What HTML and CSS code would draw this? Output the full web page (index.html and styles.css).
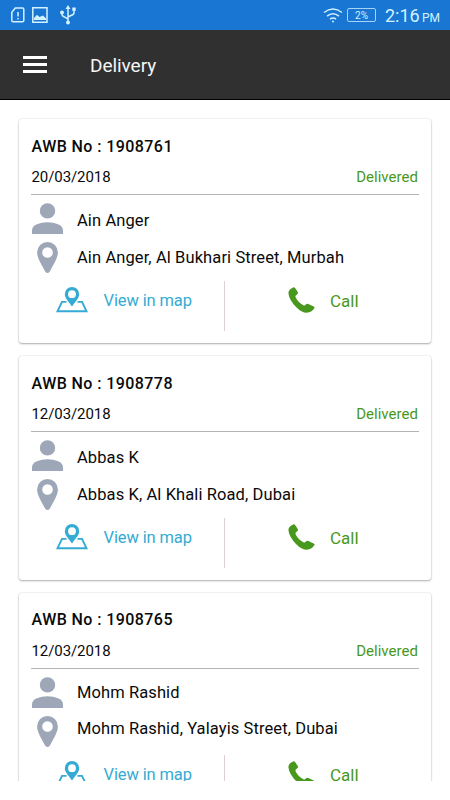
FILE: index.html
```html
<!DOCTYPE html>
<html lang="en">
<head>
<meta charset="utf-8">
<title>Delivery</title>
<link rel="stylesheet" href="styles.css">
</head>
<body>
<svg class="defs" aria-hidden="true">
  <symbol id="person" viewBox="0 0 31 31"><circle cx="15.5" cy="7.9" r="7.7"/><path d="M0 31V27.2C0 22 8 19.3 15.5 19.3S31 22 31 27.2V31Z"/></symbol>
  <symbol id="pin" viewBox="0 0 21 31"><path fill-rule="evenodd" d="M10.5 0A10.4 10.4 0 0 0 .1 10.4C.1 16 5 23.500 8.300 29.700Q10.500 32.300 12.700 29.700C16 23.500 20.900 16 20.900 10.400A10.400 10.400 0 0 0 10.500 0ZM10.500 5.200A5.300 5.300 0 1 1 10.500 15.800A5.300 5.300 0 1 1 10.500 5.200Z"/></symbol>
  <symbol id="map" viewBox="0 0 32 26"><path fill-rule="evenodd" d="M16 0A7.200 7.200 0 0 0 8.800 7.200C8.800 11.500 13 15 16 19.500C19 15 23.200 11.500 23.200 7.200A7.200 7.200 0 0 0 16 0ZM16 3.300A3.900 3.900 0 1 1 16 11.100A3.900 3.900 0 1 1 16 3.300Z"/><path d="M10.500 14.900H6L1.500 24.300H30.500L26 14.900H21.500" fill="none" stroke="currentColor" stroke-width="1.900"/></symbol>
  <symbol id="phone" viewBox="0 0 27 26"><path d="M5.700.2Q6.600.1 7.100 1L9.900 5.300Q10.400 6.200 9.500 6.900L7.800 8.400Q7.100 9.200 7.700 10.400Q10.200 15.400 15.400 18.300Q16.500 18.900 17.300 18L18.500 17Q19.300 16.500 20.300 16.900L25.700 19.500Q27 20.200 26.500 21.100Q23.600 25.700 18.800 25.800Q13.600 25.600 8 19.900Q1.300 13.300.4 6.300Q.3 2.300 5.700.2Z"/></symbol>
</svg>
<div class="screen">
  <header class="status">
    <div class="status-left">
      <svg class="sim" viewBox="0 0 14 16"><path d="M4.300 1H11.500Q12.800 1 12.800 2.300V13.500Q12.800 14.800 11.500 14.800H2Q.8 14.800.8 13.500V5.200ZM7 5V9.500M7 11V12.500"/></svg>
      <svg class="image" viewBox="0 0 16 16"><path class="outline" d="M.8.800H15V15.200H.8Z"/><path d="M2 11L5 7.800L7.500 10L11 8.500L14 11.500V13H2Z"/></svg>
      <svg class="usb" viewBox="0 0 16 20"><path class="outline" d="M8 3V17M2 8V9.500Q2 11 4 11.700L8 14M14 5V7.500Q14 9.500 11.500 10.300L8 12"/><path d="M8 0L10.500 4H5.500ZM12.300 2.500H15.700V5.800H12.300Z"/><circle cx="2" cy="7.500" r="1.900"/><circle cx="8" cy="17.500" r="2"/></svg>
    </div>
    <div class="status-right">
      <svg class="wifi" viewBox="0 0 20 15"><path d="M1 4.500Q10-2.300 19 4.500M4 8.200Q10 3.200 16 8.200M7 11.200Q10 8.900 13 11.200"/><circle cx="10" cy="13.500" r="1"/></svg>
      <span class="battery">2%</span>
      <span class="clock">2:16</span><span class="period">PM</span>
    </div>
  </header>
  <nav class="toolbar">
    <div class="menu"><i></i><i></i><i></i></div>
    <h1>Delivery</h1>
  </nav>
  <main class="list">
    <article class="card">
      <h2>AWB No : 1908761</h2>
      <div class="meta"><span>20/03/2018</span><span class="state">Delivered</span></div>
      <div class="row"><svg class="person"><use href="#person"/></svg><span>Ain Anger</span></div>
      <div class="row place"><svg class="pin"><use href="#pin"/></svg><span>Ain Anger, Al Bukhari Street, Murbah</span></div>
      <div class="actions">
        <div class="action view"><svg class="map"><use href="#map"/></svg><span>View in map</span></div>
        <div class="action call"><svg class="phone"><use href="#phone"/></svg><span>Call</span></div>
      </div>
    </article>
    <article class="card">
      <h2>AWB No : 1908778</h2>
      <div class="meta"><span>12/03/2018</span><span class="state">Delivered</span></div>
      <div class="row"><svg class="person"><use href="#person"/></svg><span>Abbas K</span></div>
      <div class="row place"><svg class="pin"><use href="#pin"/></svg><span>Abbas K, Al Khali Road, Dubai</span></div>
      <div class="actions">
        <div class="action view"><svg class="map"><use href="#map"/></svg><span>View in map</span></div>
        <div class="action call"><svg class="phone"><use href="#phone"/></svg><span>Call</span></div>
      </div>
    </article>
    <article class="card raised">
      <h2>AWB No : 1908765</h2>
      <div class="meta"><span>12/03/2018</span><span class="state">Delivered</span></div>
      <div class="row"><svg class="person"><use href="#person"/></svg><span>Mohm Rashid</span></div>
      <div class="row place"><svg class="pin"><use href="#pin"/></svg><span>Mohm Rashid, Yalayis Street, Dubai</span></div>
      <div class="actions">
        <div class="action view"><svg class="map"><use href="#map"/></svg><span>View in map</span></div>
        <div class="action call"><svg class="phone"><use href="#phone"/></svg><span>Call</span></div>
      </div>
    </article>
  </main>
</div>
</body>
</html>
```
FILE: styles.css
```css
* { box-sizing: border-box; }
body { margin: 0; background: #fff; color: #0a0a0a; font-family: Roboto, sans-serif; }
.defs { display: none; }
svg { display: block; flex: none; fill: currentColor; }
.screen { width: 450px; height: 800px; overflow: hidden; }

.status { height: 30px; background: #1976d2; color: #d3f2ff; display: flex; justify-content: space-between; }
.status-left, .status-right { display: flex; align-items: center; }
.status-left { padding-left: 11px; }
.status-left .outline, .sim, .wifi path { fill: none; stroke: currentColor; stroke-width: 1.5; }
.sim { width: 14px; height: 16px; }
.image { width: 16px; height: 16px; margin-left: 7px; }
.usb { width: 16px; height: 20px; margin-left: 12px; }
.status-right { padding-right: 10px; }
.wifi { width: 20px; height: 15px; }
.battery { width: 29px; height: 14px; margin: 0 9px 0 4px; border: 1px solid #a5d4f8; border-radius: 2px; font-size: 10px; line-height: 13px; text-align: center; }
.clock { width: 35px; font-size: 18px; line-height: 30px; padding-top: 2px; white-space: nowrap; }
.period { width: 18px; margin-left: 2px; font-size: 12px; line-height: 30px; padding-top: 5px; }

.toolbar { height: 70px; background: #303030; border-bottom: 1px solid #000; color: #f5f5f5; display: flex; padding-left: 23px; }
.menu { width: 24px; height: 17px; margin-top: 26px; display: flex; flex-direction: column; justify-content: space-between; }
.menu i { height: 3px; background: #fff; }
h1 { margin: 0 0 0 43px; font-size: 19px; font-weight: 400; line-height: 72px; letter-spacing: -.05px; }

.list { height: 681px; padding: 19px 19px 0; display: flex; flex-direction: column; gap: 13px; overflow: hidden; }
.card { flex: none; height: 224px; padding: 15px 12px 0; border-radius: 3px; background: #fff; box-shadow: 0 1px 2px rgba(0,0,0,.3), 0 0 2px rgba(0,0,0,.14); }
h2 { margin: 0 0 0 .6px; font-size: 16px; line-height: 25px; font-weight: 500; letter-spacing: .42px; white-space: nowrap; }
.meta { height: 36px; border-bottom: 1px solid #b5b3b5; display: flex; justify-content: space-between; padding: 8px 1px 0 .5px; font-size: 15px; line-height: 20px; letter-spacing: -.08px; }
.state { color: #48981d; letter-spacing: .03px; }
.row { display: flex; height: 31px; margin-top: 8px; line-height: 35px; font-size: 16.5px; letter-spacing: .1px; white-space: nowrap; }
.row span { margin-left: 15px; }
.person { width: 31px; height: 31px; margin-left: .5px; color: #9da7b7; }
.pin { width: 21px; height: 31px; margin: 0 4.5px 0 5.500px; color: #9da7b7; }
.row .person + span { margin-left: 14.500px; }
.place { line-height: 31px; }
.actions { display: grid; grid-template-columns: 194px 1fr; height: 50px; margin-top: 8px; }
.action { display: flex; font-size: 16.5px; line-height: 40px; white-space: nowrap; }
.view { color: #35abd3; border-right: 1px solid #dfcfd3; padding-left: 25px; letter-spacing: -.12px; }
.map { width: 32px; height: 26px; margin: 6px 15.500px 0 0; }
.call { color: #48981d; font-size: 17px; line-height: 41px; padding-left: 63px; }
.phone { width: 27px; height: 26px; margin: 6px 15px 0 0; }
.raised h2 { line-height: 24px; padding-bottom: 1px; }
.raised .row { line-height: 31px; }
.raised .place { line-height: 26px; }
```
